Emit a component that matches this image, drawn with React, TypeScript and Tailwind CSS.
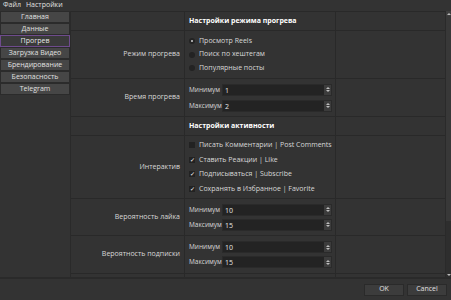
import { ReactNode } from "react";

const tabs = ["Главная", "Данные", "Прогрев", "Загрузка Видео", "Брендирование", "Безопасность", "Telegram"];

function SpinBox({ label, value }: { label: string; value: string }) {
  return (
    <div className="flex items-center h-[12px]">
      <span className="w-[33px] text-[6.5px] text-[#d8d8d8]">{label}</span>
      <div className="flex h-[12px] w-[110px] border border-[#2a2a2a] bg-[#232323]">
        <span className="flex-1 pl-[2px] text-[7px] leading-[11px] text-[#e6e6e6]">{value}</span>
        <div className="flex w-[7px] flex-col items-center justify-center gap-[1px] bg-[#3c3c3c]">
          <span className="h-0 w-0 border-x-[2px] border-b-[2px] border-x-transparent border-b-[#bdbdbd]" />
          <span className="h-0 w-0 border-x-[2px] border-t-[2px] border-x-transparent border-t-[#bdbdbd]" />
        </div>
      </div>
    </div>
  );
}

function Row({ label, h, children, bold }: { label?: string; h: string; children: ReactNode; bold?: boolean }) {
  return (
    <div className={`grid grid-cols-[114px_151px_1fr] border-b border-[#292929] ${h}`}>
      <div className="flex items-center justify-end pr-[4px] border-r border-[#292929] text-[7px] text-[#d8d8d8]">
        {label}
      </div>
      <div
        className={`flex flex-col justify-center border-r border-[#292929] pl-[4px] ${bold ? "text-[7px] font-bold text-white" : ""}`}
      >
        {children}
      </div>
      <div />
    </div>
  );
}

function Radio({ label, on }: { label: string; on?: boolean }) {
  return (
    <div className="flex items-center gap-[4px] h-[13.5px]">
      <span className="flex h-[6px] w-[6px] items-center justify-center rounded-full bg-[#232323]">
        {on && <span className="h-[2px] w-[2px] rounded-full bg-[#cfcfcf]" />}
      </span>
      <span className="text-[7px] text-[#d8d8d8]">{label}</span>
    </div>
  );
}

function Check({ label, on }: { label: string; on?: boolean }) {
  return (
    <div className="flex items-center gap-[4px] h-[14.5px]">
      <span className="flex h-[6px] w-[6px] items-center justify-center bg-[#222222] text-[6px] leading-none text-white">
        {on ? "✓" : ""}
      </span>
      <span className="text-[7px] text-[#d8d8d8]">{label}</span>
    </div>
  );
}

export default function App() {
  return (
    <div className="flex h-[300px] w-[451px] flex-col overflow-hidden bg-[#333333] font-['Open_Sans',sans-serif] text-[#dcdcdc]">
      {/* Menu */}
      <div className="flex h-[11px] items-center gap-[5px] pl-[3px] text-[7px] text-[#e0e0e0]">
        <span>Файл</span>
        <span>Настройки</span>
      </div>

      <div className="flex flex-1 min-h-0">
        {/* Sidebar */}
        <div className="flex w-[71px] flex-col gap-[0.5px] border-r border-[#2a2a2a]">
          {tabs.map((t) => (
            <div
              key={t}
              className={`flex h-[11.5px] items-center justify-center text-[7px] ${
                t === "Прогрев"
                  ? "border border-[#6e4b8c] bg-[#3a3a3a] text-[#e6e6e6]"
                  : "border border-[#2b2b2b] bg-[#464646] text-[#e0e0e0]"
              }`}
            >
              {t}
            </div>
          ))}
        </div>

        {/* Content */}
        <div className="flex flex-1 min-w-0">
          <div className="flex-1 min-w-0 overflow-hidden border-t border-[#292929]">
            <Row h="h-[19px]" bold>
              Настройки режима прогрева
            </Row>
            <Row label="Режим прогрева" h="h-[48px]">
              <Radio label="Просмотр Reels" on />
              <Radio label="Поиск по хештегам" />
              <Radio label="Популярные посты" />
            </Row>
            <Row label="Время прогрева" h="h-[38px]">
              <div className="flex flex-col gap-[4px]">
                <SpinBox label="Минимум" value="1" />
                <SpinBox label="Максимум" value="2" />
              </div>
            </Row>
            <Row h="h-[19px]" bold>
              Настройки активности
            </Row>
            <Row label="Интерактив" h="h-[63px]">
              <Check label="Писать Комментарии | Post Comments" />
              <Check label="Ставить Реакции | Like" on />
              <Check label="Подписываться | Subscribe" on />
              <Check label="Сохранять в Избранное | Favorite" on />
            </Row>
            <Row label="Вероятность лайка" h="h-[37px]">
              <div className="flex flex-col gap-[3px]">
                <SpinBox label="Минимум" value="10" />
                <SpinBox label="Максимум" value="15" />
              </div>
            </Row>
            <Row label="Вероятность подписки" h="h-[38px]">
              <div className="flex flex-col gap-[3px]">
                <SpinBox label="Минимум" value="10" />
                <SpinBox label="Максимум" value="15" />
              </div>
            </Row>
            <Row h="h-[10px]">{null}</Row>
          </div>
          {/* Scrollbar */}
          <div className="flex w-[6px] flex-col border-l border-[#2a2a2a] bg-[#2e2e2e]">
            <div className="flex h-[5px] items-center justify-center bg-[#3d3d3d]">
              <span className="h-0 w-0 border-x-[2px] border-b-[2px] border-x-transparent border-b-[#bbbbbb]" />
            </div>
            <div className="h-[205px] bg-[#383838]" />
            <div className="flex-1" />
            <div className="flex h-[5px] items-center justify-center">
              <span className="h-0 w-0 border-x-[2px] border-t-[2px] border-x-transparent border-t-[#bbbbbb]" />
            </div>
          </div>
        </div>
      </div>

      {/* Buttons */}
      <div className="flex h-[23px] items-center justify-end gap-[3px] border-t-2 border-[#2a2a2a] pr-[4px] bg-[#333333]">
        <div className="flex h-[12px] w-[40px] items-center justify-center border border-[#2a2a2a] bg-[#3c3c3c] text-[7px] text-[#e0e0e0]">
          OK
        </div>
        <div className="flex h-[12px] w-[40px] items-center justify-center border border-[#2a2a2a] bg-[#3c3c3c] text-[7px] text-[#e0e0e0]">
          Cancel
        </div>
      </div>
    </div>
  );
}
